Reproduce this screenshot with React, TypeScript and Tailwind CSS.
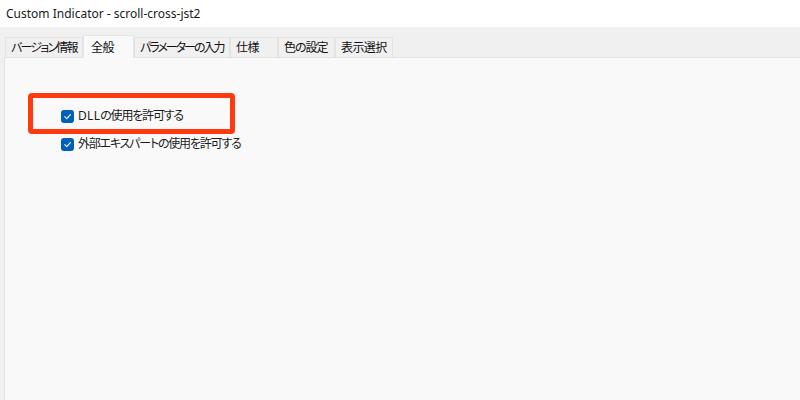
import React from "react";

const tabs = [
  { label: "バージョン情報", w: "w-[78px]", tr: "tracking-[-1.8px]" },
  { label: "全般", w: "w-[51px]", tr: "tracking-[-0.5px]", active: true },
  { label: "パラメーターの入力", w: "w-[96px]", tr: "tracking-[-2px]" },
  { label: "仕様", w: "w-[48px]", tr: "tracking-[-0.5px]" },
  { label: "色の設定", w: "w-[57px]", tr: "tracking-[-1px]" },
  { label: "表示選択", w: "w-[58px]", tr: "tracking-[-0.6px]" },
];

const font = { fontFamily: '"Noto Sans", "Noto Sans CJK JP", sans-serif' };

const Check = ({ prefix, label }: { prefix?: string; label: string }) => (
  <label className="flex items-center gap-[4px] h-[14px] text-[12px] text-[#1b1b1b] leading-none whitespace-nowrap">
    <span className="flex items-center justify-center w-[13px] h-[13px] rounded-[3px] bg-[#005fb8]">
      <svg width="9" height="9" viewBox="0 0 10 10" fill="none">
        <path d="M2 5.2 L4.2 7.3 L8.2 2.8" stroke="white" strokeWidth="1.2" strokeLinecap="round" strokeLinejoin="round" />
      </svg>
    </span>
    <span>
      {prefix && <span className="tracking-[0.3px]">{prefix}</span>}
      <span className="tracking-[-1.2px]">{label}</span>
    </span>
  </label>
);

export default function App() {
  return (
    <div
      className="w-[800px] h-[400px] bg-[#f0f0f0] flex flex-col overflow-hidden [font-feature-settings:'palt']"
      style={font}
    >
      {/* title bar */}
      <div className="h-[27px] bg-white flex items-center pl-[6px] text-[12px] text-[#1a1a1a]">
        Custom Indicator - scroll-cross-jst2
      </div>

      {/* tab strip */}
      <div className="h-[30px] flex items-end pl-[5px]">
        {tabs.map((t) =>
          t.active ? (
            <div
              key={t.label}
              className={`${t.w} ${t.tr} h-[23px] -mb-px relative z-10 bg-[#f9f9f9] border border-b-0 border-[#e5e5e5] flex items-start pt-[3px] pl-[7px] text-[12px] text-[#111] whitespace-nowrap`}
            >
              {t.label}
            </div>
          ) : (
            <div
              key={t.label}
              className={`${t.w} ${t.tr} h-[20px] bg-[#f0f0f0] border border-b-0 border-[#e3e3e3] flex items-center pl-[5px] text-[12px] text-[#111] whitespace-nowrap overflow-hidden`}
            >
              {t.label}
            </div>
          )
        )}
      </div>

      {/* content panel */}
      <div className="flex-1 ml-[4px] bg-[#f9f9f9] border-t border-l border-[#e3e3e3] relative">
        <div className="flex flex-col gap-[14px] pt-[51px] pl-[56px]">
          <Check prefix="DLL" label="の使用を許可する" />
          <Check label="外部エキスパートの使用を許可する" />
        </div>
        <div className="absolute left-[23px] top-[35px] w-[207px] h-[41px] border-[5px] border-[#ff3a0f] rounded-[4px]" />
      </div>
    </div>
  );
}
